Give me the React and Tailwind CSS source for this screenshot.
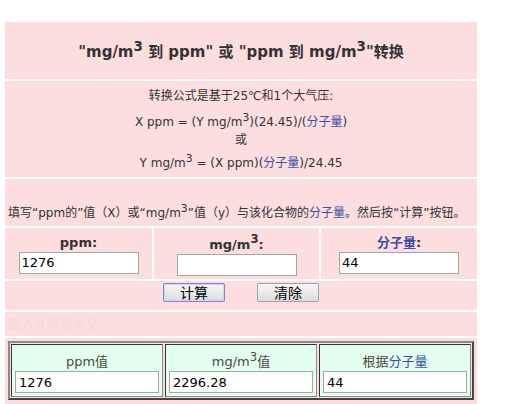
import React from "react"

const font = { fontFamily: '"DejaVu Sans", Verdana, "Noto Sans CJK SC", sans-serif' }

function Sup({ children }) {
    return <sup className="text-[0.9em] leading-none align-baseline relative top-[-0.45em]">{children}</sup>
}

function Field({ value }) {
    return (
        <input
            readOnly
            defaultValue={value}
            className="w-[120px] h-[22px] border border-[#a5a5a5] bg-white px-[2px] text-[13px] text-black outline-none"
            style={font}
        />
    )
}

function ResultCell({ label, value }) {
    return (
        <div className="flex flex-col items-center bg-[#e2fff0] border border-t-[#333] border-l-[#333] border-b-[#888] border-r-[#888] pt-[8px] px-[3px]">
            <div className="h-[18px] leading-[18px] text-[13px] text-[#4a4a3a] whitespace-nowrap">{label}</div>
            <input
                readOnly
                defaultValue={value}
                className="w-full h-[22px] border border-[#a5a5a5] bg-white px-[3px] text-[13px] text-black outline-none"
                style={font}
            />
        </div>
    )
}

export default function App() {
    return (
        <div className="bg-white w-[517px] h-[404px] overflow-hidden pt-[22px] pl-[5px]" style={font}>
            <div className="w-[472px] flex flex-col gap-[2px] text-[#333]">
                {/* title */}
                <div className="h-[57px] bg-[#fcdedf] flex items-center justify-center pt-[3px]">
                    <h1 className="text-[15px] font-bold leading-[20px]">
                        "mg/m<Sup>3</Sup> 到 ppm" 或 "ppm 到 mg/m<Sup>3</Sup>"转换
                    </h1>
                </div>

                {/* formula */}
                <div className="h-[96px] bg-[#fcdedf] flex flex-col items-center text-[12px] leading-[18px] pt-[6px]">
                    <div>转换公式是基于25℃和1个大气压:</div>
                    <div className="mt-[8px]">
                        X ppm = (Y mg/m<Sup>3</Sup>)(24.45)/(<span className="text-[#3a4fa5]">分子量</span>)
                    </div>
                    <div>或</div>
                    <div className="mt-[5px]">
                        Y mg/m<Sup>3</Sup> = (X ppm)(<span className="text-[#3a4fa5]">分子量</span>)/24.45
                    </div>
                </div>

                {/* instruction */}
                <div className="h-[47px] bg-[#fcdedf] flex items-end px-[3px] pb-[4px] text-[12px] leading-[18px] whitespace-nowrap">
                    <span>
                        填写“ppm的”值（X）或“mg/m<Sup>3</Sup>”值（y）与该化合物的<span className="text-[#3a4fa5]">分子量</span>。然后按“计算”按钮。
                    </span>
                </div>

                {/* inputs */}
                <div className="grid grid-cols-[147px_165px_156px] gap-[2px] h-[51px]">
                    <div className="bg-[#fcdedf] flex flex-col items-center justify-center">
                        <div className="h-[18px] leading-[18px] text-[13px] font-bold">ppm:</div>
                        <Field value="1276" />
                    </div>
                    <div className="bg-[#fcdedf] flex flex-col items-center justify-center">
                        <div className="h-[22px] pt-[4px] leading-[18px] text-[13px] font-bold">
                            mg/m<Sup>3</Sup>:
                        </div>
                        <Field value="" />
                    </div>
                    <div className="bg-[#fcdedf] flex flex-col items-center justify-center">
                        <div className="h-[18px] leading-[18px] text-[13px] font-bold text-[#3a4fa5]">
                            分子量<span className="text-[#333]">:</span>
                        </div>
                        <Field value="44" />
                    </div>
                </div>

                {/* buttons */}
                <div className="h-[29px] bg-[#fcdedf] flex justify-center items-start gap-[32px] pt-[2px]">
                    <button className="w-[62px] h-[19px] rounded-[2px] border border-[#8080e6] shadow-[inset_0_0_0_1px_#cfcff7] bg-gradient-to-b from-[#f7f7f7] to-[#dcdcdc] text-[14px] leading-none text-black">
                        计算
                    </button>
                    <button className="w-[62px] h-[19px] rounded-[2px] border border-[#a0a0a0] bg-gradient-to-b from-[#f7f7f7] to-[#dcdcdc] text-[14px] leading-none text-black">
                        清除
                    </button>
                </div>

                {/* hidden link row */}
                <div className="h-[24px] bg-[#fcdedf] flex items-center px-[3px] text-[13px] text-[#f9d4d6]">
                    嵌入计算器大全
                </div>

                {/* results */}
                <div className="h-[66px] bg-[#fcdedf] pt-[3px] px-[3px]">
                    <div className="h-[59px] border-2 border-t-[#8a8a8a] border-l-[#8a8a8a] border-b-[#444] border-r-[#444] p-[1px] grid grid-cols-3 gap-[2px]">
                        <ResultCell label="ppm值" value="1276" />
                        <ResultCell label={<>mg/m<Sup>3</Sup>值</>} value="2296.28" />
                        <ResultCell
                            label={<>根据<span className="text-[#3a4fa5]">分子量</span></>}
                            value="44"
                        />
                    </div>
                </div>
            </div>
        </div>
    )
}
